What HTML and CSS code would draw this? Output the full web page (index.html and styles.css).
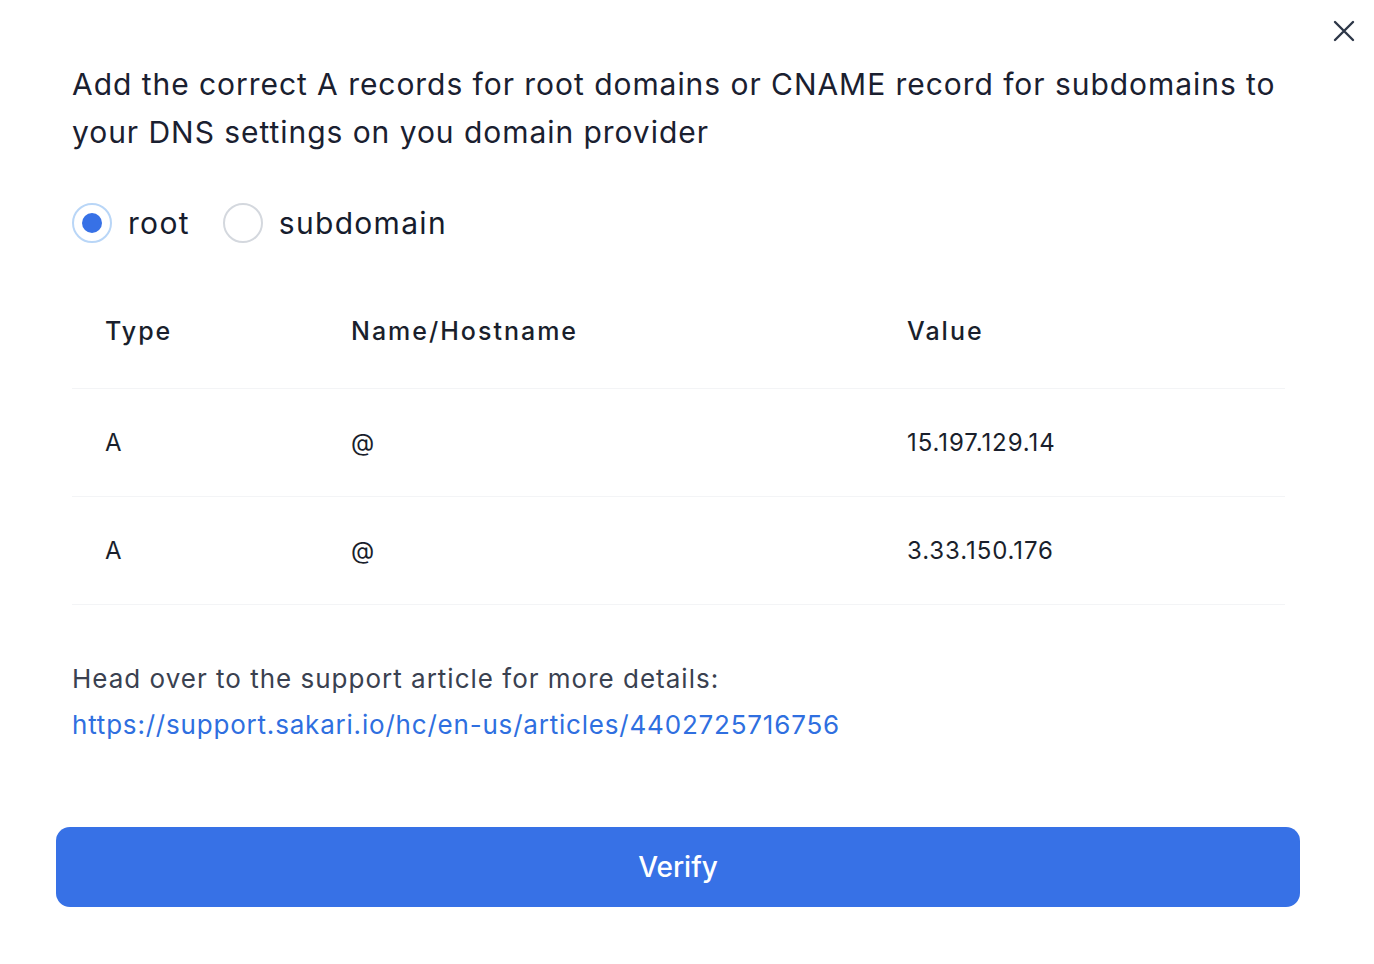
FILE: index.html
```html
<!DOCTYPE html>
<html lang="en">
<head>
    <meta charset="UTF-8">
    <meta name="viewport" content="width=device-width, initial-scale=1.0">
    <title>Verify domain</title>
    <link rel="stylesheet" href="styles.css">
</head>
<body>
    <div class="modal">
        <button class="close" aria-label="Close">
            <svg width="24" height="24" viewBox="0 0 24 24" fill="none" stroke="currentColor" stroke-width="2.4" stroke-linecap="round">
                <path d="M3 3L21 21M21 3L3 21"/>
            </svg>
        </button>

        <p class="intro">Add the correct A records for root domains or CNAME record for subdomains to your DNS settings on you domain provider</p>

        <div class="radios">
            <label class="radio checked"><span class="dot"></span>root</label>
            <label class="radio"><span class="dot"></span>subdomain</label>
        </div>

        <div class="records">
            <div class="row head">
                <div>Type</div>
                <div>Name/Hostname</div>
                <div>Value</div>
            </div>
            <div class="row">
                <div>A</div>
                <div>@</div>
                <div>15.197.129.14</div>
            </div>
            <div class="row">
                <div>A</div>
                <div>@</div>
                <div>3.33.150.176</div>
            </div>
        </div>

        <p class="help">Head over to the support article for more details:<br>
            <a href="#">https://support.sakari.io/hc/en-us/articles/4402725716756</a></p>

        <button class="verify">Verify</button>
    </div>
</body>
</html>
```

FILE: styles.css
```css
body {
    margin: 0;
    background: #fff;
    font-family: 'Inter', sans-serif;
    color: #111827;
}

.modal {
    position: relative;
    width: 1374px;
    height: 964px;
    padding: 60px 0 0 72px;
    box-sizing: border-box;
}

.close {
    position: absolute;
    top: 19px;
    right: 18px;
    padding: 0;
    border: none;
    background: none;
    color: #2d3748;
    cursor: pointer;
}

.intro {
    margin: 0;
    width: 1230px;
    font-size: 30px;
    line-height: 48px;
    letter-spacing: 0.95px;
    color: #1a2030;
}

.radios {
    display: flex;
    gap: 33px;
    margin-top: 47px;
}

.radio {
    display: flex;
    align-items: center;
    gap: 16px;
    font-size: 30px;
    letter-spacing: 1.3px;
    color: #161c2d;
}

.dot {
    width: 36px;
    height: 36px;
    border: 2px solid #d4d8de;
    border-radius: 50%;
    display: flex;
    align-items: center;
    justify-content: center;
}

.radio.checked .dot {
    border-color: #b9d6f7;
}

.radio.checked .dot::after {
    content: '';
    width: 20px;
    height: 20px;
    border-radius: 50%;
    background: #3771e6;
}

.records {
    width: 1213px;
    margin-top: 32px;
}

.row {
    display: grid;
    grid-template-columns: 246px 556px 1fr;
    align-items: center;
    height: 107px;
    border-bottom: 1px solid #f3f4f6;
    padding-left: 33px;
    font-size: 24px;
    letter-spacing: 0.9px;
    color: #1a1f2c;
}

.row.head {
    height: 112px;
    padding-bottom: 1px;
    font-size: 25px;
    font-weight: 500;
    letter-spacing: 2px;
}

.help {
    margin: 51px 0 0;
    font-size: 26px;
    line-height: 46px;
    letter-spacing: 1px;
    color: #3a4150;
}

.help a {
    color: #2f6fe0;
    letter-spacing: 0.8px;
    text-decoration: none;
}

.verify {
    display: block;
    width: 1244px;
    height: 80px;
    margin: 79px 0 0 -16px;
    border: none;
    border-radius: 14px;
    background: #3771e6;
    color: #fff;
    font-family: inherit;
    font-size: 28px;
    font-weight: 500;
    cursor: pointer;
}
```
